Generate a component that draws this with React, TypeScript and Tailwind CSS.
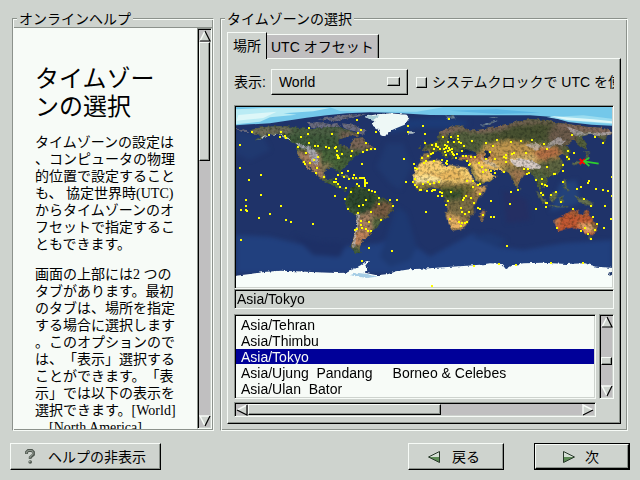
import { useState } from "react";
import type { ReactNode } from "react";

const HELP_TITLE = "タイムゾー\nンの選択";

const HELP_PARAGRAPHS = [
  "タイムゾーンの設定は\n、コンピュータの物理\n的位置で設定すること\nも、 協定世界時(UTC)\nからタイムゾーンのオ\nフセットで指定するこ\nともできます。",
  "画面の上部には2 つの\nタブがあります。最初\nのタブは、場所を指定\nする場合に選択します\n。このオプションので\nは、「表示」選択する\nことができます。「表\n示」では以下の表示を\n選択できます。[World]\n　[North America]",
];

const ZONES = [
  { name: "Asia/Tehran" },
  { name: "Asia/Thimbu" },
  { name: "Asia/Tokyo" },
  { name: "Asia/Ujung  Pandang", note: "Borneo & Celebes" },
  { name: "Asia/Ulan  Bator" },
];

const VIEWS = ["World", "North America", "South America", "Pacific Rim", "Europe", "Africa", "Asia"];

// City markers, western and eastern half of the map
const CITIES_WEST =
  "30,134 66,96 117,104 153,96 150,111 165,108 168,114 213,111 237,84 234,102 204,141 237,129 255,138 264,138 288,141 297,144 306,102 315,144 318,141 321,153 321,165 324,168 324,174 327,174 336,162 228,159 252,180 264,171 240,189 222,186 225,192 261,204 258,219 282,231 381,60 393,90 384,99 438,96 408,129 366,153 363,168 399,156 411,150 423,147 435,147 396,192 354,213 336,219 324,225 342,231 357,237 369,234 378,234 390,234 396,234 402,234 405,240 405,246 405,252 411,249 405,258 372,225 381,252 387,258 318,237 312,246 318,246 324,252 330,261 348,264 363,276 315,288 345,297 354,327 384,339 387,318 399,315 408,300 417,270 426,273 435,276 447,294 447,312 423,336 480,300 501,300 489,318 453,360 417,366 393,363 393,375 396,384 381,387 375,390 408,387 414,393 423,393 417,444 486,453 396,483 30,204 57,240 93,225 93,285 48,300 48,318 48,330 51,333 33,330 87,354 120,342 153,318 168,360 183,366 249,372 33,420 522,177 534,78 579,78 534,96 585,102 585,129 552,192 555,204 561,207 528,246 588,336 576,174 582,189 588,183 594,168 549,246 555,237 555,255 561,261 570,270 579,252 591,273 594,246";
const CITIES_EAST =
  "87,57 15,102 69,111 93,111 114,108 114,117 102,126 84,126 117,126 123,129 132,138 156,123 36,135 48,132 48,138 54,141 75,135 81,138 60,147 42,147 72,147 78,144 87,144 96,147 90,150 84,153 96,156 99,162 102,165 111,162 126,153 75,156 78,165 39,159 33,162 24,168 6,174 18,183 12,189 42,183 66,180 81,183 81,192 78,189 108,174 129,168 138,168 153,171 141,183 150,192 147,195 177,189 165,171 198,129 219,138 231,120 273,126 303,123 336,120 372,132 381,147 318,159 282,159 276,162 258,165 252,171 258,174 258,186 210,156 225,177 198,177 186,201 189,216 198,210 213,213 225,219 252,216 312,207 324,207 327,219 321,222 381,201 405,222 402,222 429,195 429,213 429,246 456,105 525,111 549,129 444,153 462,159 441,171 447,177 366,237 348,240 366,252 375,255 381,258 408,276 393,285 363,279 369,285 378,309 381,309 378,321 348,327 294,270 273,276 270,312 213,303 213,351 222,351 423,306 459,327 492,297 513,318 555,318 471,267 483,261 504,249 507,243 528,267 549,270 564,273 576,288 576,231 573,357 552,384 531,372 519,351 525,390 504,402 513,417 495,384 483,393 411,384 261,438 237,492 162,498 288,495 393,489 489,489 36,558 84,303 78,315 54,288 66,288 66,279 60,276 93,276 45,270 39,270 36,273 3,270 9,252 24,246 30,252 42,249 57,246 141,243 159,243 159,261 174,255 180,252 180,282 153,294 138,288 132,294 129,300 162,309 174,324 180,327 189,345 123,324 126,336 135,342 147,336 90,357 117,366 126,369 135,369 141,366 123,378";

function Cities({ points, offset = 0 }: { points: string; offset?: number }) {
  return (
    <g fill="#ffff00" shapeRendering="crispEdges">
      {points.split(" ").map((point, i) => {
        const [x, y] = point.split(",").map((n) => Math.round(Number(n) / 3) * 3);
        return <rect key={i} x={x + offset - 3} y={y - 3} width="6" height="6" />;
      })}
    </g>
  );
}

function WorldMap() {
  return (
    <svg viewBox="18 21 1128 540" preserveAspectRatio="none" className="block h-full w-full" role="img" aria-label="World map">
      <defs>
        <filter id="rough" x="0" y="0" width="1" height="1" colorInterpolationFilters="sRGB">
          <feTurbulence type="fractalNoise" baseFrequency="0.07" numOctaves="3" seed="4" result="n" />
          <feDisplacementMap in="SourceGraphic" in2="n" scale="12" xChannelSelector="R" yChannelSelector="G" result="d" />
          <feTurbulence type="fractalNoise" baseFrequency="0.12" numOctaves="2" seed="7" result="g" />
          <feColorMatrix in="g" type="matrix" values="0 0 0 0 0.05  0 0 0 0 0.08  0 0 0 0 0.05  0 1 0 0 -0.42" result="shade" />
          <feComposite in="shade" in2="d" operator="in" result="grain" />
          <feMerge>
            <feMergeNode in="d" />
            <feMergeNode in="grain" />
          </feMerge>
        </filter>
        <filter id="coast" x="0" y="0" width="1" height="1" colorInterpolationFilters="sRGB">
          <feTurbulence type="fractalNoise" baseFrequency="0.09" numOctaves="2" seed="9" />
          <feDisplacementMap in="SourceGraphic" scale="10" xChannelSelector="R" yChannelSelector="G" />
        </filter>
        <filter id="soft" colorInterpolationFilters="sRGB">
          <feGaussianBlur stdDeviation="6" />
        </filter>
        <filter id="haze" colorInterpolationFilters="sRGB">
          <feGaussianBlur stdDeviation="2" />
        </filter>
        <clipPath id="america">
          <path d="M62 92L80 84 110 80 165 77 205 84 240 88 290 82 330 82 360 92 385 100 380 112 360 106 345 112 328 120 325 130 345 138 358 148 364 132 372 115 398 112 412 128 430 142 434 150 410 152 385 162 372 172 357 185 347 200 337 208 332 215 338 230 332 228 322 210 300 202 288 206 284 222 290 240 304 240 314 230 310 246 325 250 335 264 352 268 348 274 325 264 300 250 275 241 260 228 245 208 232 190 240 212 234 212 222 192 208 172 201 150 196 136 175 120 150 106 120 102 90 118 75 123 95 107 70 104Z" />
          <path d="M362 264L380 259 392 261 415 270 440 280 448 292 475 302 490 312 488 330 475 352 455 362 440 385 425 398 415 408 400 420 392 435 388 448 392 460 375 458 362 440 370 415 378 380 380 350 360 335 345 310 345 295 355 285Z" />
        </clipPath>
        <clipPath id="africa">
          <path d="M-5 190L15 183 35 181 62 180 66 195 80 200 90 195 110 199 140 203 150 222 165 247 178 260 202 256 195 275 172 300 160 320 163 340 148 350 145 368 125 390 100 394 88 375 77 345 82 312 68 290 64 268 40 262 15 270 -5 276 -18 252 -20 232 -14 210Z" />
          <path d="M182 366L178 347 190 328 197 332 190 362Z" />
        </clipPath>
        <clipPath id="eurasia">
          <path d="M3 184L2 166 20 163 28 160 20 147 10 142 28 132 45 125 62 119 50 112 56 98 80 86 100 79 130 80 150 92 190 88 230 82 260 75 290 65 330 57 380 60 400 66 440 72 500 80 550 84 577 95 577 104 560 110 552 128 535 110 510 104 485 110 497 130 500 150 480 137 460 120 440 135 455 155 445 162 452 182 441 180 430 160 415 168 427 182 430 200 415 220 395 230 378 232 380 252 373 262 365 255 357 247 366 272 377 290 360 274 350 247 335 220 323 226 308 226 300 242 290 265 280 250 270 222 255 215 230 210 205 208 215 222 230 228 210 245 180 254 165 237 152 212 144 195 147 182 120 181 115 170 125 165 145 167 172 168 160 154 130 151 110 158 100 164 105 176 95 178 88 165 75 156 68 151 85 170 80 178 66 162 55 152 40 158 30 170 24 181Z" />
          <path d="M8 153L14 143 10 128 17 122 19 135 26 148ZM-6 146L2 135 4 148Z" />
        </clipPath>
        <clipPath id="oceania">
          <path d="M403 360L425 350 440 338 460 329 475 332 480 347 490 345 495 327 502 330 510 345 528 368 532 388 518 406 500 402 485 390 465 382 440 386 412 395 407 378Z" />
        </clipPath>
      </defs>

      <rect x="18" y="21" width="1128" height="540" fill="#1f3369" />
      {/* Deep and shallow water */}
      <g filter="url(#soft)">
        <path d="M18 405L120 410 240 440 310 470 340 440 450 430 500 400 600 470 730 400 800 440 880 450 1000 430 1146 420V520H18Z" fill="#21407e" />
        <path d="M190 405L260 425 350 430 330 470 250 465Z" fill="#1d3066" />
        <path d="M470 130L520 130 545 200 510 270 480 250 440 200ZM18 90L100 110 120 150 60 180 18 160Z" fill="#203970" />
        <path d="M500 320L530 340 560 440 540 480 480 500 450 470ZM720 410L780 400 830 420 800 440Z" fill="#1e3972" />
        <path d="M480 62L640 50 720 66 690 84 560 84 480 100Z" fill="#1c3b77" />
        <path d="M990 250L1040 240 1050 310 960 335Z" fill="#23427a" />
        <path d="M820 270L890 300 900 360 830 370Z" fill="#242f63" />
      </g>

      {/* Arctic */}
      <path d="M18 21H1146V77L1085 74 1015 66 960 50 900 46 740 46 600 45 500 39 420 37 350 40 290 46 230 53 170 62 120 70 60 73 18 76Z" fill="#74c8ea" />
      <g filter="url(#haze)">
        <path d="M18 28L100 24 300 24 250 34 160 40 200 44 120 52 90 65 18 73Z" fill="#b9ebf4" />
        <path d="M300 22H640L560 35 400 35 330 33ZM950 52L1060 46 1146 56V72L1020 62Z" fill="#9adcf0" />
        <path d="M25 45L140 35 100 54 20 62ZM960 48L1090 58 1146 64V70L1010 60Z" fill="#ddf7f8" />
        <path d="M660 32L800 28 930 38 800 42Z" fill="#5ab4e2" />
      </g>

      <g filter="url(#coast)">
        <path d="M402 50L440 43 480 40 530 44 538 54 524 74 500 84 478 94 464 110 452 106 442 86 424 74 434 62Z" fill="#eef8f6" />
        <path d="M404 50L450 46 438 54 430 60Z" fill="#a9cdd5" />
        <path d="M534 94L554 94 550 101 538 101Z" fill="#b0bec3" />
      </g>

      <g filter="url(#rough)">
        {/* Arctic islands, Aleutians, Antilles */}
        <path d="M230 70L262 66 300 72 325 68 330 80 292 84 245 82ZM262 58L310 50 350 44 410 42 380 50 340 58 320 64ZM336 70L370 74 388 84 410 92 400 104 380 94 355 90 340 82ZM18 86L48 90 60 96 30 95Z" fill="#6b6c80" />
        <path d="M324 226L345 226 362 232 355 235ZM366 234L384 234 386 240 368 240Z" fill="#6c7955" />
        <g clipPath="url(#america)">
          <rect x="18" y="70" width="500" height="410" fill="#3f5a3b" />
          <g filter="url(#soft)">
            <path d="M60 80L180 76 190 100 150 104 60 120Z" fill="#6f6d5a" />
            <path d="M190 85L340 82 330 105 200 105Z" fill="#4d6045" />
            <path d="M330 90L440 105 440 150 360 150 330 128Z" fill="#7a6557" />
            <path d="M200 150L270 155 285 215 290 245 250 235 210 190Z" fill="#a37c60" />
            <path d="M270 150L330 150 350 200 275 210Z" fill="#48643a" />
            <path d="M275 190L310 195 290 210 275 205Z" fill="#98805d" />
            <path d="M270 235L350 255 350 275 300 260Z" fill="#4b6740" />
            <path d="M355 265L430 275 455 330 400 345 350 310Z" fill="#2d482f" />
            <path d="M440 305L495 305 480 350 440 365 415 340Z" fill="#785c42" />
            <path d="M378 345L425 335 445 370 425 400 380 395Z" fill="#a57f62" />
            <path d="M370 395L425 390 410 425 390 440 365 440Z" fill="#c4855c" />
            <path d="M425 350L455 355 440 385 425 380Z" fill="#5c6a42" />
          </g>
          <path d="M85 120L100 108 135 101 165 108 185 120 170 118 140 108 115 110Z" fill="#d1d8da" />
          <path d="M233 135L248 148 262 160 268 184 256 194 244 184 240 164 228 150ZM196 128L220 136 234 146 216 145 202 138Z" fill="#b5b7c5" opacity=".8" />
          <path d="M380 340L388 345 384 380 378 415 374 445 366 442 374 400Z" fill="#bfb8b5" opacity=".8" />
        </g>

        <g transform="translate(570 0)">
          {/* Russian arctic islands */}
          <path d="M180 78L205 66 235 62 205 74ZM205 54L235 48 225 54ZM75 50L100 48 110 54 88 57Z" fill="#6d8297" />
          <g clipPath="url(#eurasia)">
            <rect x="-10" y="50" width="600" height="260" fill="#535f3d" />
            <g filter="url(#soft)">
              <path d="M60 70L170 85 290 60 580 70V110L460 92 380 75 290 85 180 100 120 90 60 110Z" fill="#82675c" />
              <path d="M280 75L400 70 440 110 330 125 200 118Z" fill="#475030" />
              <path d="M390 80L470 90 470 130 420 140 380 120Z" fill="#6b5a4a" />
              <path d="M190 135L260 120 330 130 410 140 420 170 340 200 220 200 180 160Z" fill="#c1974f" />
              <path d="M260 170L360 165 345 190 265 182Z" fill="#dab974" />
              <path d="M340 150L410 140 430 160 380 180 350 175Z" fill="#b56f45" />
              <path d="M355 185L425 170 430 215 385 230 350 210Z" fill="#5d6441" />
              <path d="M145 180L215 180 260 215 200 250 170 240Z" fill="#f0c267" />
              <path d="M115 165L215 160 220 180 120 185Z" fill="#bd7c4c" />
              <path d="M260 205L325 210 290 265Z" fill="#a27850" />
              <path d="M0 150L40 155 28 185 0 185Z" fill="#937951" />
              <path d="M340 220L380 220 385 290 350 270Z" fill="#52643f" />
            </g>
            <path d="M270 178L300 175 345 186 364 198 358 207 322 203 290 200 275 192Z" fill="#dfd4d4" opacity=".9" />
            <path d="M180 165L195 178 225 190 235 204 220 202 186 180Z" fill="#c4b9ac" opacity=".6" />
            <path d="M315 135L345 128 370 142 345 150ZM372 138L405 118 415 110 430 120 442 115 428 138 410 132 385 148ZM438 78L470 90 500 100 560 96 577 92 570 104 540 108 500 106 465 108Z" fill="#c8c2c9" opacity=".6" />
            <path d="M192 150L205 152 208 168 200 178 194 170 198 162Z" fill="#1a2d55" />
            <path d="M86 102L92 96 92 115 108 120 98 124 84 120Z" fill="#20325b" />
          </g>
          <g clipPath="url(#africa)">
            <rect x="-25" y="170" width="240" height="240" fill="#846d45" />
            <g filter="url(#soft)">
              <path d="M-35 170L150 180 175 250 150 250 60 248 -35 255Z" fill="#fbd071" />
              <path d="M-30 230L50 226 70 246 -30 252Z" fill="#ffeaa0" />
              <path d="M-25 260L170 258 160 278 -25 285Z" fill="#6f6b34" />
              <path d="M55 268L130 270 130 300 80 310Z" fill="#3b5230" />
              <path d="M170 255L210 255 180 290 165 285Z" fill="#dfa860" />
              <path d="M80 300L150 295 160 340 130 350 85 340Z" fill="#7d6f47" />
              <path d="M75 340L115 350 140 375 110 400 80 380Z" fill="#ebb467" />
              <path d="M180 330L200 330 190 366Z" fill="#b0755a" />
            </g>
            <path d="M0 215L60 220 110 205 135 235 70 238Z" fill="#d69849" opacity=".4" />
          </g>
          {/* Japan, Indonesia, Philippines, New Guinea, Tasmania */}
          <path d="M458 190L470 183 483 184 497 174 500 160 490 155 506 154 504 178 484 192 462 195ZM345 272L362 285 382 308 380 314 366 304ZM380 315L400 316 420 320 442 318 440 322 400 322ZM388 286L406 273 414 288 402 303 390 300ZM416 290L434 287 426 294 432 304 420 304ZM464 290L480 292 500 298 520 314 516 320 496 312 478 306ZM430 238L438 244 440 262 450 270 442 274 432 258ZM298 260L304 266 300 272ZM504 410L517 410 510 418Z" fill="#64704f" />
          <g clipPath="url(#oceania)">
            <rect x="400" y="320" width="140" height="90" fill="#c25832" />
            <g filter="url(#soft)">
              <path d="M430 335L500 325 510 345 460 342Z" fill="#99633d" />
              <path d="M470 370L510 370 525 395 500 400Z" fill="#edb97a" />
              <path d="M518 345L535 380 528 405 519 390Z" fill="#6b6343" />
              <path d="M403 355L415 350 410 398 404 395Z" fill="#c89869" />
            </g>
          </g>
          <path d="M118 150L135 146 150 150 166 160 148 162 130 160Z" fill="#1b2e59" />
        </g>
      </g>

      {/* Antarctica */}
      <g filter="url(#coast)">
        <path d="M10 528L60 522 100 516 150 512 200 514 260 517 320 519 350 518 372 506 392 496 408 484 420 484 406 496 412 510 408 519 440 526 475 522 500 514 540 508 600 505 640 502 700 498 750 494 780 490 815 492 828 508 848 496 880 490 940 488 1010 492 1065 490 1100 500 1152 504V570H10Z" fill="#f7fdfa" />
        <path d="M360 526L380 518 410 522 440 530 410 534Z" fill="#a5cde5" />
        <path d="M1134 520L1146 512V526Z" fill="#1e3669" />
      </g>
      <path d="M18 535H1146V561H18Z" fill="#f7fdfa" />

      <Cities points={CITIES_WEST} />
      <Cities points={CITIES_EAST} offset={570} />

      {/* Selected city */}
      <path d="M1049 177L1065 192M1065 177L1049 192" stroke="#ff0000" strokeWidth="6" fill="none" />
      <path d="M1078 173L1062 184 1078 198M1062 184L1086 188 1106 191" stroke="#2ed02e" strokeWidth="5" fill="none" />
    </svg>
  );
}

type Direction = "up" | "down" | "left" | "right";

const ARROWS: Record<Direction, { light: string; dark: string }> = {
  up: { light: "M1 11L6 1", dark: "M6 1L11 11H1" },
  down: { light: "M6 11L1 1H11", dark: "M11 1L6 11" },
  left: { light: "M1 6L11 1", dark: "M1 6L11 11V1" },
  right: { light: "M11 6L1 1V11", dark: "M11 6L1 11" },
};

function ScrollArrow({ direction }: { direction: Direction }) {
  return (
    <button type="button" aria-label={`Scroll ${direction}`} className="h-3 w-3 shrink-0">
      <svg viewBox="0 0 12 12" className="block h-3 w-3" fill="none">
        <path d={ARROWS[direction].light + ARROWS[direction].dark.replace("M", "L")} fill="#ced3ce" />
        <path d={ARROWS[direction].light} stroke="#f7fbf7" strokeWidth="1.5" />
        <path d={ARROWS[direction].dark} stroke="#000000" strokeWidth="1.2" />
      </svg>
    </button>
  );
}

const SUNKEN = "border border-t-[#8c928c] border-l-[#8c928c] border-r-[#f7fbf7] border-b-[#f7fbf7]";
const SUNKEN_SHADE = "shadow-[inset_1px_1px_0_#000000,inset_-1px_-1px_0_#ced3ce]";
const RAISED =
  "border border-t-[#f7fbf7] border-l-[#f7fbf7] border-r-black border-b-black shadow-[inset_-1px_-1px_0_#8c928c]";
const GROOVE =
  "border border-t-[#8c928c] border-l-[#8c928c] border-r-[#f7fbf7] border-b-[#f7fbf7] shadow-[inset_1px_1px_0_#f7fbf7,inset_-1px_-1px_0_#8c928c]";

function Frame({ title, className, children }: { title: string; className: string; children: ReactNode }) {
  return (
    <section aria-label={title} className={`relative mt-2 flex min-w-0 flex-col p-px ${GROOVE} ${className}`}>
      <h2 className="absolute -top-2 left-1 bg-[#ced3ce] px-0.5 leading-4">{title}</h2>
      {children}
    </section>
  );
}

function HelpPanel() {
  return (
    <Frame title="オンラインヘルプ" className="w-[202px] shrink-0">
      <div className="mt-[7px] flex min-h-0 flex-1 border-t border-[#8c928c]">
        <div className="min-w-0 flex-1 overflow-hidden bg-[#f7fbf7] pt-[37px] pl-[21px] font-['Liberation_Serif','Noto_Sans_CJK_JP',serif] [text-spacing-trim:space-all]">
          <h1 className="text-2xl leading-7 whitespace-pre">{HELP_TITLE}</h1>
          {HELP_PARAGRAPHS.map((text) => (
            <p key={text} className="mt-[13px] text-sm leading-[17px] whitespace-pre">
              {text}
            </p>
          ))}
        </div>
        <div className={`flex w-[15px] flex-col items-center bg-[#c0bfc0] p-px ${SUNKEN} ${SUNKEN_SHADE}`}>
          <ScrollArrow direction="up" />
          <div className={`h-[119px] w-full bg-[#ced3ce] ${RAISED}`} />
          <div className="flex-1" />
          <ScrollArrow direction="down" />
        </div>
      </div>
    </Frame>
  );
}

function ZoneList({ selected, onSelect }: { selected: string; onSelect: (name: string) => void }) {
  return (
    <div className="mt-[5px] grid grid-cols-[1fr_15px] gap-[3px]">
      <div className={`overflow-hidden bg-[#f7fbf7] p-px ${SUNKEN} ${SUNKEN_SHADE}`}>
        <ul role="listbox" aria-label="タイムゾーン" className="pt-px">
          {ZONES.map((zone) => (
            <li
              key={zone.name}
              role="option"
              aria-selected={zone.name === selected}
              onClick={() => onSelect(zone.name)}
              className={`mb-px flex h-[15px] gap-5 pl-[5px] leading-[17px] whitespace-pre ${
                zone.name === selected ? "bg-[#000099] text-[#f7fbf7]" : ""
              }`}
            >
              <span>{zone.name}</span>
              {zone.note && <span>{zone.note}</span>}
            </li>
          ))}
        </ul>
      </div>
      <div className={`flex flex-col items-center bg-[#c0bfc0] p-px ${SUNKEN} ${SUNKEN_SHADE}`}>
        <ScrollArrow direction="up" />
        <div className="flex-[3]" />
        <div className={`h-2 w-full bg-[#ced3ce] ${RAISED}`} />
        <div className="flex-[2]" />
        <ScrollArrow direction="down" />
      </div>
      <div className={`flex h-[15px] items-center bg-[#c0bfc0] p-px ${SUNKEN} ${SUNKEN_SHADE}`}>
        <ScrollArrow direction="left" />
        <div className={`h-full w-[54%] bg-[#ced3ce] ${RAISED}`} />
        <div className="flex-1" />
        <ScrollArrow direction="right" />
      </div>
    </div>
  );
}

function TimezonePanel() {
  const [zone, setZone] = useState("Asia/Tokyo");
  const [tab, setTab] = useState("location");

  return (
    <Frame title="タイムゾーンの選択" className="flex-1">
      <div className="mx-[5px] mt-3 mb-[5px] flex min-h-0 flex-1 flex-col">
        <div role="tablist" className="flex items-end">
          <button
            type="button"
            role="tab"
            aria-selected={tab === "location"}
            onClick={() => setTab("location")}
            className="relative z-10 -mb-px h-[27px] w-10 border border-t-[#f7fbf7] border-r-black border-b-0 border-l-[#f7fbf7] bg-[#ced3ce]"
          >
            場所
          </button>
          <button
            type="button"
            role="tab"
            aria-selected={tab === "offset"}
            onClick={() => setTab("offset")}
            className="h-6 border border-t-[#f7fbf7] border-r-black border-b-0 border-l-0 bg-[#c0bfc0] px-1 shadow-[inset_-1px_0_0_#8c928c]"
          >
            UTC オフセット
          </button>
        </div>

        <div className={`flex min-h-0 flex-1 flex-col px-[6px] pt-[10px] pb-[6px] ${RAISED}`}>
          <div className="flex h-[26px] shrink-0 items-center overflow-hidden">
            <label htmlFor="view" className="shrink-0">表示:</label>
            <div className="relative ml-[5px] h-full w-[137px] shrink-0">
              <select id="view" defaultValue="World" className={`h-full w-full appearance-none bg-[#ced3ce] px-[7px] leading-5 ${RAISED}`}>
                {VIEWS.map((view) => (
                  <option key={view}>{view}</option>
                ))}
              </select>
              <span className={`pointer-events-none absolute top-2 right-2 h-[9px] w-[13px] ${RAISED}`} />
            </div>
            <label className="ml-2 flex shrink-0 items-center gap-[5px] whitespace-nowrap">
              <input type="checkbox" className={`h-[11px] w-[11px] appearance-none checked:bg-[#8c928c] ${RAISED}`} />
              システムクロックで UTC を使用
            </label>
          </div>

          <div className={`mt-[10px] min-h-0 flex-1 p-px ${SUNKEN} ${SUNKEN_SHADE}`}>
            <WorldMap />
          </div>
          <output className={`block h-5 shrink-0 px-0.5 leading-[18px] ${SUNKEN} shadow-[inset_1px_1px_0_#000000]`}>{zone}</output>
          <ZoneList selected={zone} onSelect={setZone} />
        </div>
      </div>
    </Frame>
  );
}

function HelpIcon() {
  return (
    <svg viewBox="0 0 10 15" className="h-[15px] w-[10px]" fill="none">
      <path d="M1.5 5V3.2L3.2 1.5H6.8L8.5 3.2V5.5L5.2 8.4V10" stroke="#4d554d" strokeWidth="2.8" />
      <path d="M1.5 4.5V3.2L3.2 1.5H6.8L8 3.2V5L5 8V9.5" stroke="#8b948b" strokeWidth="1.2" />
      <circle cx="5.2" cy="13" r="1.8" fill="#4d554d" />
      <circle cx="4.8" cy="12.6" r=".8" fill="#a3aca3" />
    </svg>
  );
}

function StepIcon({ back = false }: { back?: boolean }) {
  return (
    <svg viewBox="0 0 12 12" className={`h-3 w-3 ${back ? "-scale-x-100" : ""}`}>
      <path d="M.5 .5L11.5 6H.5Z" fill="#d5ded5" />
      <path d="M.5 6H11.5L.5 11.5Z" fill="#5c8a55" />
      <path d="M.5 .5L11.5 6 .5 11.5Z" fill="none" stroke="#28382a" />
    </svg>
  );
}

function Footer() {
  return (
    <footer className="mt-3 flex h-[27px] shrink-0 items-stretch">
      <button type="button" className={`flex items-center gap-[13px] px-[14px] ${RAISED}`}>
        <HelpIcon />
        <span>ヘルプの非表示</span>
      </button>
      <button type="button" className={`ml-auto flex w-24 items-center gap-3 pl-[19px] ${RAISED}`}>
        <StepIcon back />
        <span>戻る</span>
      </button>
      <div className="ml-[30px] flex w-24 border border-black">
        <button type="button" className={`flex flex-1 items-center gap-[10px] pl-[27px] ${RAISED}`}>
          <StepIcon />
          <span>次</span>
        </button>
      </div>
    </footer>
  );
}

export default function App() {
  return (
    <div className="flex h-screen flex-col overflow-hidden bg-[#ced3ce] p-[10px] font-['Liberation_Sans','Noto_Sans_CJK_JP',sans-serif] text-sm text-black">
      <main className="flex min-h-0 flex-1 gap-[6px] px-0.5">
        <HelpPanel />
        <TimezonePanel />
      </main>
      <Footer />
    </div>
  );
}
